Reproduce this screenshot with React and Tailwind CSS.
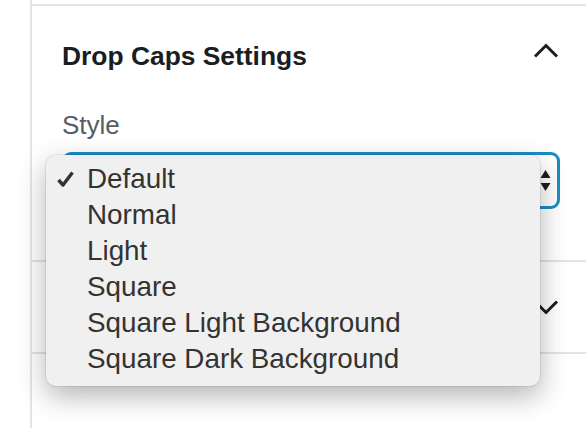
import React from "react";

function ChevronUp() {
  return (
    <svg width="26" height="15" viewBox="0 0 26 15" fill="none">
      <path d="M2 13.5 L13 2.5 L24 13.5" stroke="#191e23" strokeWidth="3" />
    </svg>
  );
}

function ChevronDown() {
  return (
    <svg width="26" height="15" viewBox="0 0 26 15" fill="none">
      <path d="M2 1.5 L13 12.5 L24 1.5" stroke="#191e23" strokeWidth="3" />
    </svg>
  );
}

function Check() {
  return (
    <svg width="17" height="16" viewBox="0 0 17 16" fill="none">
      <path d="M1.5 9 L6 14 L15.5 1.5" stroke="#333333" strokeWidth="3.4" strokeLinejoin="round" />
    </svg>
  );
}

const options = [
  "Default",
  "Normal",
  "Light",
  "Square",
  "Square Light Background",
  "Square Dark Background",
];

export default function App() {
  return (
    <div className="relative w-[586px] h-[428px] overflow-hidden bg-white font-['Liberation_Sans',Arial,sans-serif]">
      <div className="ml-[30px] h-full border-l-2 border-[#e2e4e7] pt-[4px]">
        <div className="border-t-2 border-b-2 border-[#e2e4e7] pl-[30px] pr-[26px] pt-[35px] pb-[51px]">
          <div className="flex items-start justify-between">
            <h2 className="text-[26.4px] leading-[30px] font-bold text-[#191e23]">
              Drop Caps Settings
            </h2>
            <div className="mt-[2px] mr-[1px]">
              <ChevronUp />
            </div>
          </div>
          <div className="mt-[39px] text-[26px] leading-[30px] text-[#555d66]">Style</div>
          <div className="mt-[12px] h-[57px] rounded-[9px] border-[3px] border-[#1a8dc6] bg-white flex items-center justify-end pr-[6px]">
            <svg width="11" height="22" viewBox="0 0 11 22">
              <path d="M5.5 0 L10.5 8 L0.5 8 Z" fill="#1e1e1e" />
              <path d="M5.5 21 L10.5 13 L0.5 13 Z" fill="#1e1e1e" />
            </svg>
          </div>
        </div>
        <div className="h-[92px] border-b-2 border-[#e2e4e7] flex items-center justify-end pr-[27px]">
          <ChevronDown />
        </div>
      </div>

      <div className="absolute left-[46px] top-[155px] w-[494px] h-[231px] rounded-[10px] bg-[#f0f0f0] pt-[6px] shadow-[0_10px_28px_rgba(0,0,0,0.3),0_0_0_1px_rgba(0,0,0,0.07)]">
        {options.map((o, i) => (
          <div key={o} className="flex items-center h-[36px] text-[27.8px] text-[#333333]">
            <span className="w-[41px] pl-[11px] flex items-center">
              {i === 0 ? <Check /> : null}
            </span>
            <span className="leading-[36px]">{o}</span>
          </div>
        ))}
      </div>
    </div>
  );
}
